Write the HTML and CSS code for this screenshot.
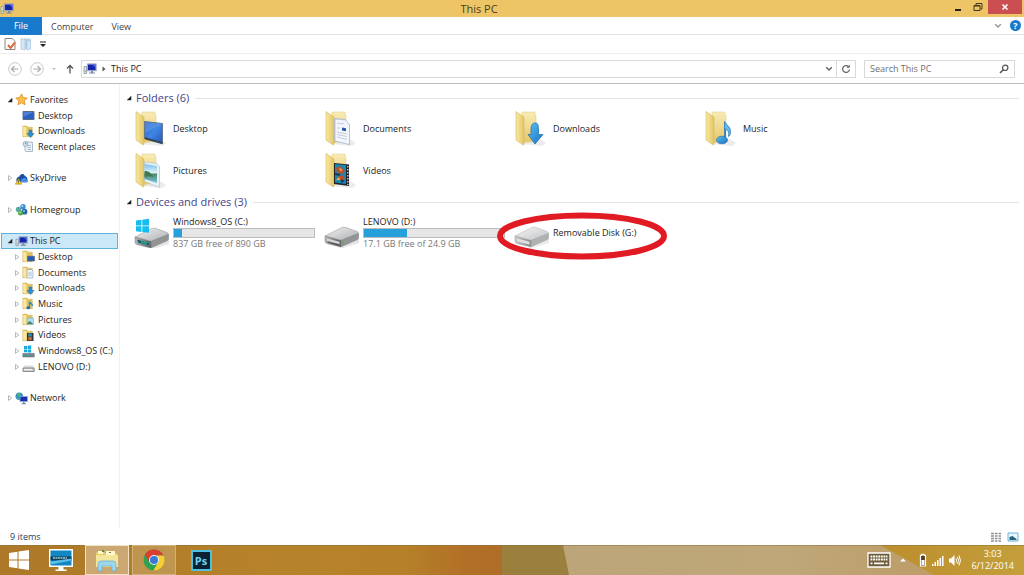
FILE: index.html
```html
<!DOCTYPE html>
<html lang="en">
<head>
<meta charset="utf-8">
<title>This PC</title>
<link rel="stylesheet" href="styles.css">
</head>
<body>
<svg class="defs" aria-hidden="true">
  <defs>
    <linearGradient id="gFold" x1="0" x2="1"><stop offset="0" stop-color="#f9e9a0"/><stop offset="1" stop-color="#e3c566"/></linearGradient>
    <linearGradient id="gBack" x1="0" y1="0" x2="0" y2="1"><stop offset="0" stop-color="#f8ebb4"/><stop offset="1" stop-color="#e6c669"/></linearGradient>
    <linearGradient id="gBlue" x1="0" y1="0" x2="1" y2="1"><stop offset="0" stop-color="#2f66c4"/><stop offset=".5" stop-color="#3f86e6"/><stop offset="1" stop-color="#2357b4"/></linearGradient>
    <linearGradient id="gArrow" x1="0" y1="0" x2="1" y2="1"><stop offset="0" stop-color="#5cc0f5"/><stop offset="1" stop-color="#1672c0"/></linearGradient>
    <linearGradient id="gMetal" x1="0" y1="0" x2="1" y2="1"><stop offset="0" stop-color="#f4f4f4"/><stop offset="1" stop-color="#a9abad"/></linearGradient>
    <linearGradient id="gDark" x1="0" x2="1"><stop offset="0" stop-color="#b9bbbd"/><stop offset="1" stop-color="#55585b"/></linearGradient>
    <linearGradient id="gPhoto" x1="0" y1="0" x2="0" y2="1"><stop offset="0" stop-color="#7dbdee"/><stop offset=".45" stop-color="#dcf1f7"/><stop offset=".55" stop-color="#4d8a72"/><stop offset="1" stop-color="#7fc4dc"/></linearGradient>
  </defs>
  <symbol id="pc" viewBox="0 0 14 13"><path fill="#dfe3ea" stroke="#7d889c" stroke-width=".7" d="M1 4h2.600v7H1z"/><path fill="#55b060" d="M1.600 8h1.300v1H1.600z"/><path fill="#c3ccdf" stroke="#7684a8" stroke-width=".6" d="M4.300 1.300h9v7h-9z"/><path fill="#1524a8" d="M5 2h7.600v5.600H5z"/><path fill="#5575e0" d="M9 2h3.600v3z"/><path fill="#7a88a8" d="M8 8.400h2v1.600h2v1H6v-1h2z"/></symbol>
  <symbol id="folder" viewBox="0 0 36 38"><path fill="#000" opacity=".08" d="M8 34l20 2 4-3-6-4z"/><path fill="url(#gBack)" stroke="#e0c984" stroke-width=".5" d="M8 2h13v2l1 1v26l-14 2z"/><path fill="url(#gFold)" stroke="#d2b663" stroke-width=".6" d="M2 1.500l8 5.500v27c0 1-.8 1.200-1.500.6L2 30z"/></symbol>
  <symbol id="f-desktop" viewBox="0 0 36 38"><use href="#folder"/><path fill="url(#gBlue)" stroke="#66758f" d="M10.500 11.500l18 2V33.500l-18-6z"/><path fill="#75a9f2" opacity=".4" d="M11 12l17 2-17 9z"/><path fill="#33465e" d="M10.500 27l18 5v2.200l-18-5z"/></symbol>
  <symbol id="f-documents" viewBox="0 0 36 38"><use href="#folder"/><path fill="#dde7f6" stroke="#a3b2cf" stroke-width=".6" d="M10.500 8.500l10 1 5 5v20l-15-4z"/><path fill="#f3f6fc" stroke="#9dadc9" stroke-width=".6" d="M11 9l11 1 3.500 5v19.500L11 31z"/><path fill="#2958a8" d="M18 17.500l4 .8v3l-4-.8z"/><path stroke="#a2afc6" stroke-width=".6" d="M13 13l7 .8M13 18h3M13 22l10 2M13 24.500l10 2M13 27l10 2.500"/></symbol>
  <symbol id="f-downloads" viewBox="0 0 36 38"><use href="#folder"/><path fill="url(#gArrow)" stroke="#1d6cb0" stroke-width=".7" d="M17 20c0-6 2-7 4.500-7s3 2 3 8v3.500h4.500L21 34l-7-9.500h3z"/></symbol>
  <symbol id="f-music" viewBox="0 0 36 38"><use href="#folder"/><path fill="#5ebcf2" stroke="#2573b6" stroke-width=".8" d="M20.500 11.500c2 4 6 5 6 10 0 3-1 4-2 5 1-5-1-6.500-3-7.500V29h-1z"/><ellipse cx="18" cy="30" rx="5.500" ry="3.800" fill="url(#gArrow)" stroke="#1d5fa6" stroke-width=".6"/></symbol>
  <symbol id="f-pictures" viewBox="0 0 36 38"><use href="#folder"/><path fill="#e8f1f6" stroke="#a9bac5" stroke-width=".6" d="M10.500 10l12.500 1.500 2.500 3v21l-15-6z"/><path fill="url(#gPhoto)" d="M10.500 12l12.500 2v17l-12.500-4z"/><path fill="#41784c" d="M10.500 19c5 0 6 2 9 6-4-1-6-1-9 0z"/></symbol>
  <symbol id="f-videos" viewBox="0 0 36 38"><use href="#folder"/><path fill="#22252a" d="M10 11l15 1.500V34l-15-2z"/><path fill="#1887b8" d="M11 12l11 1v19l-11-1.500z"/><path fill="#b9502a" d="M12 16l4-2 5 5-3 3-5-1zM13 25l5-2 3 3-3 4z"/><path fill="#efb34a" d="M15 16l3 1-1 3zM12 28l3-3 1 3z"/><path fill="#173d5a" d="M11 21l6 1-2 2-4-1zM17 27l4 2-4 2z"/><path stroke="#dedede" stroke-width="1.200" stroke-dasharray="1.500 1.500" d="M23.800 14v19"/></symbol>
  <symbol id="drive" viewBox="0 0 36 22"><path fill="#000" opacity=".1" d="M4 19l13 3 18-9v4l-16 5z"/><path fill="url(#gMetal)" stroke="#9b9c9e" stroke-width=".6" d="M1 10L18 1.500q2-.5 4 0l11 4q1.500.6 1.500 2L17 14.500z"/><path fill="url(#gDark)" stroke="#77797b" stroke-width=".5" d="M1 10l16 4.500v6.500L3 17.500Q1 17 1 15z"/><path fill="#929496" stroke="#77797b" stroke-width=".5" d="M17 14.500l17.500-7v4.500q0 1-1 1.600L17 21z"/><path fill="#d5d6d7" d="M3 12.500l12.500 3.300v2.700L3 15.200z"/><ellipse cx="20" cy="5" rx="3" ry="1.300" fill="#d2d3d4"/></symbol>
  <symbol id="d-hdd" viewBox="0 0 36 22"><use href="#drive"/><path fill="#2b3032" opacity=".55" d="M3 15l12 3v1.500L4 17z"/><path fill="#5bb52a" d="M18.500 15.500l1.500-.6v3l-1.500.6z"/></symbol>
  <symbol id="d-usb" viewBox="0 0 36 22"><g opacity=".72"><use href="#drive"/></g></symbol>
  <symbol id="win" viewBox="0 0 20 20"><path fill="currentColor" d="M0 3l8.500-1.200v7.700H0zM9.500 1.600L20 0v9.500H9.500zM0 10.500h8.500v7.700L0 17zM9.500 10.500H20V20L9.500 18.400z"/></symbol>
  <symbol id="d-os" viewBox="0 0 36 30"><use href="#drive" y="9" width="36" height="22"/><path fill="#14636a" d="M3 21.500l12.500 3.300v2.700L4 24.800z"/><path fill="#1fa58c" d="M7 23l6 1.500v1.700l-6-1.500z"/><path fill="#14bdf0" d="M2 2.500L7.500 1.800v5.700H2zM8.300 1.700L15 .8v6.700H8.300zM2 8.300h5.500V14L2 13.300zM8.300 8.300H15v6.500l-6.700-.8z"/></symbol>
  <symbol id="sf" viewBox="0 0 13 13"><path fill="#e2c15c" stroke="#cfae52" stroke-width=".5" d="M.8 1h4l1 1.200h4.500v9.500H.8z"/><path fill="#f8e8a4" d="M1.200 1.500l3.300 1v9.200l-3.300-.6z"/></symbol>
  <symbol id="s-desktop" viewBox="0 0 13 13"><use href="#sf"/><path fill="#275bb8" stroke="#51647f" stroke-width=".6" d="M5.500 6.200h7V11h-7z"/></symbol>
  <symbol id="s-documents" viewBox="0 0 13 13"><use href="#sf"/><path fill="#eaf3fb" stroke="#8ba5c0" stroke-width=".6" d="M5 3.500h4.500L11 5v7H5z"/><path stroke="#8aa2bd" stroke-width=".6" d="M6 7h4M6 9h4"/></symbol>
  <symbol id="s-downloads" viewBox="0 0 13 13"><use href="#sf"/><path fill="#2b8ed8" stroke="#1766a8" stroke-width=".4" d="M7 5h3v3.500h2.300L8.500 12.500 4.800 8.500H7z"/></symbol>
  <symbol id="s-music" viewBox="0 0 13 13"><use href="#sf"/><path fill="none" stroke="#2588d2" stroke-width="1.300" d="M7.500 10.500V4.500c0 2 3.500 2 2.800 4.500"/><ellipse cx="6.300" cy="10.700" rx="1.900" ry="1.500" fill="#1a6fbe"/></symbol>
  <symbol id="s-pictures" viewBox="0 0 13 13"><use href="#sf"/><path fill="#a8dff1" stroke="#8fa9b8" stroke-width=".6" d="M5 5h6.500v6.500H5z"/><path fill="#4b8661" d="M5.300 10l2.500-2 3.400 3H5.300z"/></symbol>
  <symbol id="s-videos" viewBox="0 0 13 13"><use href="#sf"/><path fill="#30343a" d="M5 4h6.500v8H5z"/><path fill="#2b91b5" d="M6.200 4.500h3.600v3H6.200z"/><path fill="#c36a35" d="M6.200 8h3.600v3.300H6.200z"/></symbol>
  <symbol id="s-desk" viewBox="0 0 13 13"><path fill="#2a5fc0" stroke="#5d6c86" d="M1 2.500h11v8H1z"/><path fill="#6496e6" opacity=".6" d="M1.500 3h10l-10 5z"/></symbol>
  <symbol id="s-recent" viewBox="0 0 13 13"><path fill="#eef3f7" stroke="#8a9daf" stroke-width=".7" d="M3 2h7.500q-1 1 0 2v7.500H4.500Q3 11.500 3 10z"/><path stroke="#8fa3b6" stroke-width=".7" d="M5.500 5.500H9M5.500 7.500H9M5.500 9.500H9"/><circle cx="3.500" cy="4" r="2.400" fill="#d6e9f7" stroke="#7490aa" stroke-width=".7"/><path fill="none" stroke="#456" stroke-width=".6" d="M3.500 2.800V4h1"/></symbol>
  <symbol id="s-star" viewBox="0 0 13 13"><path fill="#fbc044" stroke="#dd8826" stroke-width=".8" d="M6.500.9l1.700 3.700 4 .5-3 2.700.8 4-3.500-2-3.500 2 .8-4-3-2.700 4-.5z"/></symbol>
  <symbol id="s-sky" viewBox="0 0 13 13"><path fill="#174fa6" d="M2 10C0 7 3 4.500 4.500 4.500 5 1.500 9 1 9.800 4c3 .3 3.400 5 1.700 6z"/><path fill="#4b8bdc" d="M6 10.500c-1-2 .5-4 1.800-3.800C8.500 5 11.500 5.500 11.500 7.500c2 .2 1.500 3 .5 3z"/><path fill="#fbd026" stroke="#8f7400" stroke-width=".5" d="M3.500 6.500l3.200 5.700H.4z"/><path fill="#333" d="M3.200 8.300h.7v2h-.7zM3.200 10.700h.7v.7h-.7z"/></symbol>
  <symbol id="s-home" viewBox="0 0 13 13"><circle cx="8" cy="3.700" r="2.700" fill="#3a8edb"/><circle cx="3.500" cy="6.500" r="2.700" fill="#5aa9a0"/><circle cx="9.500" cy="8.700" r="2.900" fill="#2565b6"/><circle cx="5.500" cy="10" r="2.500" fill="#55a843"/><circle cx="7.300" cy="3" r="1" fill="#b8dff8"/><circle cx="9" cy="8" r="1" fill="#9bc8f1"/><circle cx="5" cy="9.400" r=".8" fill="#c5edb1"/></symbol>
  <symbol id="s-os" viewBox="0 0 13 13"><path fill="#15a9e0" d="M2 1h3v3H2zM5.600.6h3.600V4H5.600zM2 4.600h3v2.600H2zM5.600 4.600h3.600v2.800H5.600z"/><path fill="#77868e" stroke="#59646a" stroke-width=".5" d="M.8 8.500h11.500v3.500H.8z"/><path fill="#26a3a8" d="M2 10h6v1H2z"/></symbol>
  <symbol id="s-hdd" viewBox="0 0 13 13"><path fill="#dadcdd" d="M2.500 5.500h8l1.800 3H.8z"/><path fill="#c3c5c7" stroke="#77797b" stroke-width=".8" d="M1 8h11.200v3.500H1z"/><path fill="#fff" d="M2.200 9.200h8v1h-8z"/></symbol>
  <symbol id="s-net" viewBox="0 0 13 13"><circle cx="4.300" cy="4.300" r="3.800" fill="#2f93c8"/><path fill="#60b754" d="M2 1.500l3-.5.5 2-2 1.500zM1 5l2 .5.500 2z"/><path fill="#1830b0" stroke="#93a5c9" stroke-width=".8" d="M5 4.500h7.500v5H5z"/><path fill="#7687a8" d="M8 10h1.600v1.200H11v1H6.500v-1H8z"/></symbol>
  <symbol id="open" viewBox="0 0 6 6"><path fill="#222" d="M5.300.7v4.600H.7z"/></symbol>
  <symbol id="shut" viewBox="0 0 6 6"><path fill="#fff" stroke="#a6a6a6" stroke-width=".8" d="M1.500.6L4.800 3 1.500 5.400z"/></symbol>
  <symbol id="chev" viewBox="0 0 8 6"><path fill="none" stroke="currentColor" stroke-width="1.500" d="M1.200 1.200L4 4l2.800-2.800"/></symbol>
</svg>

<header class="titlebar">
  <svg class="ic14"><use href="#pc"/></svg>
  <h1>This PC</h1>
  <div class="winbtns">
    <button aria-label="Minimize"><svg viewBox="0 0 10 10"><path fill="#222" d="M2 7h6v2H2z"/></svg></button>
    <button aria-label="Restore"><svg viewBox="0 0 10 10"><path fill="none" stroke="#443619" d="M3 3V1.500h6V7H7.500"/><path fill="none" stroke="#443619" d="M1 3.500h6v5H1z"/><path fill="#443619" d="M1 3h6v1.500H1z"/></svg></button>
    <button class="close" aria-label="Close"><svg viewBox="0 0 10 10"><path stroke="#fff" stroke-width="1.500" d="M2.500 2.500l5 5m0-5l-5 5"/></svg></button>
  </div>
</header>

<nav class="tabs">
  <button class="tab file">File</button><button class="tab">Computer</button><button class="tab">View</button>
  <span class="grow"></span>
  <button class="plain gray" aria-label="Expand ribbon"><svg class="chev"><use href="#chev"/></svg></button>
  <button class="help" aria-label="Help">?</button>
</nav>

<div class="quick">
  <button class="plain" aria-label="Properties"><svg class="ic14" viewBox="0 0 14 14"><path fill="#fff" stroke="#8a8a8a" d="M2 1.500h7.500l2.500 3v8H2z"/><path fill="none" stroke="#dd6b3c" stroke-width="2" d="M5 8l2.500 3L12 5.500"/></svg></button>
  <button class="plain" aria-label="New folder"><svg class="ic14" viewBox="0 0 14 14"><path fill="#b4d0ea" d="M5 1.500h6.500V12H5z"/><path fill="#d6e6f4" stroke="#a9c5de" stroke-width=".7" d="M2 1.500l4 1V13l-4-1zM8 4l3.500-1v9L8 13z"/></svg></button>
  <button class="plain" aria-label="Customize toolbar"><svg viewBox="0 0 8 8" class="ic8"><path fill="#222" d="M1 1.500h6v1H1zM1 4h6L4 7z"/></svg></button>
</div>

<div class="address">
  <button class="plain" aria-label="Back"><svg class="ic14" viewBox="0 0 14 14"><circle cx="7" cy="7" r="6.300" fill="none" stroke="#bbb" stroke-width=".8"/><path fill="none" stroke="#aaa" stroke-width="1.200" d="M10.500 7h-7M6.500 4l-3 3 3 3"/></svg></button>
  <button class="plain" aria-label="Forward"><svg class="ic14" viewBox="0 0 14 14"><circle cx="7" cy="7" r="6.300" fill="none" stroke="#bbb" stroke-width=".8"/><path fill="none" stroke="#aaa" stroke-width="1.200" d="M3.500 7h7M7.500 4l3 3-3 3"/></svg></button>
  <button class="plain recent" aria-label="Recent locations"><svg class="ic8" viewBox="0 0 8 8"><path fill="#bbb" d="M2 3h4L4 5z"/></svg></button>
  <button class="plain" aria-label="Up"><svg class="up" viewBox="0 0 10 10"><path fill="none" stroke="#555" stroke-width="1.300" d="M5 9.500V1.500M2 4.500l3-3 3 3"/></svg></button>
  <div class="path">
    <svg class="ic14"><use href="#pc"/></svg>
    <svg class="ic8" viewBox="0 0 8 8"><path fill="#555" d="M2.500 1.500L5.500 4l-3 2.500z"/></svg>
    <a href="#this-pc">This PC</a>
    <span class="grow"></span>
    <button class="plain" aria-label="Previous locations"><svg class="chev"><use href="#chev"/></svg></button>
    <button class="refresh" aria-label="Refresh"><svg viewBox="0 0 10 10"><path fill="none" stroke="#666" stroke-width="1.300" d="M7.500 2.700A3.400 3.400 0 1 0 8.400 5.500"/><path fill="#666" d="M5.500 3.800h3.200V.6z"/></svg></button>
  </div>
  <form class="search">
    <input type="search" aria-label="Search This PC" placeholder="Search This PC">
    <button class="plain" type="button" aria-label="Search"><svg class="up" viewBox="0 0 10 10"><circle cx="6.200" cy="3.800" r="2.700" fill="none" stroke="#555" stroke-width="1.200"/><path stroke="#555" stroke-width="1.600" d="M4.300 5.700L1 9"/></svg></button>
  </form>
</div>

<div class="body">
  <aside>
    <ul class="tree">
      <li class="root"><svg class="tw"><use href="#open"/></svg><svg class="ic13"><use href="#s-star"/></svg><a href="#">Favorites</a></li>
      <li><svg class="ic13"><use href="#s-desk"/></svg><a href="#">Desktop</a></li>
      <li><svg class="ic13"><use href="#s-downloads"/></svg><a href="#">Downloads</a></li>
      <li><svg class="ic13"><use href="#s-recent"/></svg><a href="#">Recent places</a></li>
      <li aria-hidden="true"></li>
      <li class="root"><svg class="tw"><use href="#shut"/></svg><svg class="ic13"><use href="#s-sky"/></svg><a href="#">SkyDrive</a></li>
      <li aria-hidden="true"></li>
      <li class="root"><svg class="tw"><use href="#shut"/></svg><svg class="ic13"><use href="#s-home"/></svg><a href="#">Homegroup</a></li>
      <li aria-hidden="true"></li>
      <li class="root selected" id="this-pc"><svg class="tw"><use href="#open"/></svg><svg class="ic13"><use href="#pc"/></svg><a href="#">This PC</a></li>
      <li><svg class="tw"><use href="#shut"/></svg><svg class="ic13"><use href="#s-desktop"/></svg><a href="#">Desktop</a></li>
      <li><svg class="tw"><use href="#shut"/></svg><svg class="ic13"><use href="#s-documents"/></svg><a href="#">Documents</a></li>
      <li><svg class="tw"><use href="#shut"/></svg><svg class="ic13"><use href="#s-downloads"/></svg><a href="#">Downloads</a></li>
      <li><svg class="tw"><use href="#shut"/></svg><svg class="ic13"><use href="#s-music"/></svg><a href="#">Music</a></li>
      <li><svg class="tw"><use href="#shut"/></svg><svg class="ic13"><use href="#s-pictures"/></svg><a href="#">Pictures</a></li>
      <li><svg class="tw"><use href="#shut"/></svg><svg class="ic13"><use href="#s-videos"/></svg><a href="#">Videos</a></li>
      <li><svg class="tw"><use href="#shut"/></svg><svg class="ic13"><use href="#s-os"/></svg><a href="#">Windows8_OS (C:)</a></li>
      <li><svg class="tw"><use href="#shut"/></svg><svg class="ic13"><use href="#s-hdd"/></svg><a href="#">LENOVO (D:)</a></li>
      <li aria-hidden="true"></li>
      <li class="root"><svg class="tw"><use href="#shut"/></svg><svg class="ic13"><use href="#s-net"/></svg><a href="#">Network</a></li>
    </ul>
  </aside>
  <main>
    <section>
      <h2><svg class="tw"><use href="#open"/></svg>Folders (6)</h2>
      <div class="tiles">
        <a class="tile" href="#"><svg class="fi"><use href="#f-desktop"/></svg>Desktop</a>
        <a class="tile" href="#"><svg class="fi"><use href="#f-documents"/></svg>Documents</a>
        <a class="tile" href="#"><svg class="fi"><use href="#f-downloads"/></svg>Downloads</a>
        <a class="tile" href="#"><svg class="fi"><use href="#f-music"/></svg>Music</a>
        <a class="tile" href="#"><svg class="fi"><use href="#f-pictures"/></svg>Pictures</a>
        <a class="tile" href="#"><svg class="fi"><use href="#f-videos"/></svg>Videos</a>
      </div>
    </section>
    <section>
      <h2><svg class="tw"><use href="#open"/></svg>Devices and drives (3)</h2>
      <div class="tiles">
        <a class="tile" href="#"><svg class="di"><use href="#d-os"/></svg><span class="info"><span>Windows8_OS (C:)</span><span class="bar"><span class="fill" style="width:6%"></span></span><span class="free">837 GB free of 890 GB</span></span></a>
        <a class="tile" href="#"><svg class="di low"><use href="#d-hdd"/></svg><span class="info"><span>LENOVO (D:)</span><span class="bar"><span class="fill" style="width:31%"></span></span><span class="free">17.1 GB free of 24.9 GB</span></span></a>
        <a class="tile" href="#"><svg class="di low"><use href="#d-usb"/></svg>Removable Disk (G:)<svg class="mark" viewBox="0 0 172 48"><ellipse cx="86" cy="24" rx="82" ry="20.500" fill="none" stroke="#e01b24" stroke-width="6"/></svg></a>
      </div>
    </section>
  </main>
</div>

<div class="status">
  <span>9 items</span><span class="grow"></span>
  <button class="plain" aria-label="Details view"><svg class="view" viewBox="0 0 12 10"><path stroke="#8b8f96" stroke-width="1.300" d="M1 1.500h3M1 4h3M1 6.500h3M1 9h3M5 1.500h2.500M5 4h2.500M5 6.500h2.500M5 9h2.500M8.500 1.500H11M8.500 4H11M8.500 6.500H11M8.500 9H11"/></svg></button>
  <button class="plain" aria-label="Large icons view"><svg class="view" viewBox="0 0 12 10"><path fill="#eaf7fd" stroke="#6db4d6" d="M1 1h10v8H1z"/><path fill="#2a6382" d="M2.500 5l3-1 4 3v1h-7z"/></svg></button>
</div>

<footer class="taskbar">
  <svg class="wall" viewBox="0 0 1024 30" preserveAspectRatio="none" aria-hidden="true">
    <defs>
      <linearGradient id="w1" x1="0" x2="1"><stop offset="0" stop-color="#ad7828"/><stop offset=".6" stop-color="#b7832a"/><stop offset=".8" stop-color="#b58028"/><stop offset=".92" stop-color="#b27027"/><stop offset="1" stop-color="#ae6c28"/></linearGradient>
      <linearGradient id="w2" x1="0" x2="1"><stop offset="0" stop-color="#bca578"/><stop offset=".6" stop-color="#bfa778"/><stop offset="1" stop-color="#bd9c68"/></linearGradient>
      <linearGradient id="w3" x1="0" x2="1"><stop offset="0" stop-color="#bc8d2c"/><stop offset="1" stop-color="#c49f3b"/></linearGradient>
    </defs>
    <path fill="url(#w1)" d="M0 0h506v30H0z"/><path fill="#9b7f3c" d="M502 0h64l6 30h-70z"/><path fill="url(#w2)" d="M563 0h325l50 30H569z"/><path fill="url(#w3)" d="M880 0h144v30H934q-28-16-54-30z"/><path fill="#8a7440" opacity=".5" d="M0 0h1024v1H0z"/>
  </svg>
  <button class="task" aria-label="Start"><svg viewBox="0 0 20 20" class="ic20"><g color="#fff"><use href="#win"/></g></svg></button>
  <button class="task" aria-label="Lenovo"><svg class="ic26" viewBox="0 0 26 24"><path fill="#fff" d="M1 1h24v18H1z"/><path fill="#1387c2" d="M2.500 2.500h21v15h-21z"/><path fill="#0a405f" d="M2.500 8.500h21v4h-21z"/><path fill="#59bfe7" d="M2.500 13.500l21-3v2l-21 4z"/><path stroke="#fff" stroke-dasharray="2 .5" d="M5 10h14"/><path fill="#fff" d="M10.500 19h5v2.500h3V23h-11v-1.500h3z"/></svg></button>
  <button class="task on bright" aria-label="File Explorer"><svg class="ic26" viewBox="0 0 26 24"><path fill="#e7c95e" d="M2 4l7-1 2 2h12v14H2z"/><path fill="#fff8d3" d="M4 3h5v3H4zM12 3h9v4h-9z"/><path fill="#5e8c37" d="M8 2h2v2H8zM15 4h2v1h-2z"/><path fill="#f3e69a" d="M2 7h22v12H2z"/><path fill="#9dd6ef" stroke="#65aacd" stroke-width=".7" d="M4 23v-7q0-3 3-3h12q3 0 3 3v7h-4v-5H8v5z"/></svg></button>
  <button class="task on" aria-label="Chrome"><svg class="ic22" viewBox="0 0 22 22"><circle cx="11" cy="11" r="10.500" fill="#2fa44f"/><path fill="#dc3d31" d="M1.900 5.700A10.500 10.500 0 0 1 20.500 6.500H11L6.500 13.500z"/><path fill="#f7cf33" d="M20.500 6.500A10.500 10.500 0 0 1 10.300 21.500L15.500 13 14 6.500z"/><circle cx="11" cy="11" r="5" fill="#f2f2f2"/><circle cx="11" cy="11" r="4" fill="#3a78d6"/></svg></button>
  <button class="task" aria-label="Photoshop"><span class="ps">Ps</span></button>
  <span class="grow"></span>
  <div class="tray">
    <button class="plain" aria-label="Touch keyboard"><svg class="kb" viewBox="0 0 24 16"><path fill="#6f5b36" stroke="#fff" stroke-width="1.300" d="M1 1h22v14H1z"/><path stroke="#fff" stroke-width="1.800" stroke-dasharray="1.900 .7" d="M3.500 4.500h17M3.500 7.500h17"/><path stroke="#fff" stroke-width="1.800" d="M3.500 11.300h2M7 11.300h10M18.500 11.300h2"/></svg></button>
    <button class="plain more" aria-label="Show hidden icons"><svg class="ic8" viewBox="0 0 8 8"><path fill="#fff" d="M1 5.500h6L4 2.500z"/></svg></button>
    <button class="plain" aria-label="Battery"><svg class="bat" viewBox="0 0 8 14"><path fill="#53401f" stroke="#fff" stroke-width="1.200" d="M3 1.300h2v1h1.500V13h-5V2.300H3z"/><path fill="#fff" d="M2.500 7h3v5h-3z"/></svg></button>
    <button class="plain" aria-label="Network"><svg class="ic13" viewBox="0 0 13 13"><path fill="#fff" d="M1 10h1.500v2H1zM3.500 8H5v4H3.500zM6 6h1.500v6H6zM8.500 4H10v8H8.500zM11 2h1.500v10H11z"/></svg></button>
    <button class="plain" aria-label="Volume"><svg class="ic13" viewBox="0 0 13 13"><path fill="#fff" d="M1 4.500h2L6.500 1v11L3 8.500H1z"/><path fill="none" stroke="#fff" d="M8 4.500q1.200 2 0 4M9.500 3q2.300 3.500 0 7M11 1.500q3 5 0 10"/></svg></button>
    <div class="clock"><time>3:03</time><time>6/12/2014</time></div>
  </div>
</footer>
</body>
</html>
```
FILE: styles.css
```css
* { box-sizing: border-box; }
body {
  margin: 0;
  min-height: 100vh;
  display: flex;
  flex-direction: column;
  background: #fff;
  color: #1c1c1c;
  font: 9px/12px "Open Sans", "Noto Sans", sans-serif;
}
a { color: inherit; text-decoration: none; }
button { padding: 0; border: 0; background: none; color: inherit; font: inherit; }
svg { display: block; flex: none; }
.defs { position: absolute; width: 0; height: 0; }
.grow { flex: 1; }
.plain { display: flex; align-items: center; }
.ic8 { width: 8px; height: 8px; }
.ic13 { width: 13px; height: 13px; }
.ic14 { width: 14px; height: 14px; }
.ic20 { width: 20px; height: 20px; }
.ic22 { width: 22px; height: 22px; }
.ic26 { width: 26px; height: 24px; }
.up { width: 10px; height: 10px; }
.chev { width: 8px; height: 6px; }
.tw { width: 6px; height: 6px; }

.titlebar {
  display: grid;
  grid-template-columns: 1fr auto 1fr;
  height: 17px;
  align-items: center;
  background: #eec566;
}
.titlebar h1 { margin: 0; padding-right: 66px; color: #4a3d20; font-size: 11px; line-height: 16px; font-weight: 400; }
.winbtns { display: flex; align-self: start; justify-content: flex-end; padding-right: 2px; }
.winbtns button { display: grid; place-items: center; width: 20px; height: 14px; }
.winbtns svg { width: 10px; height: 10px; }
.winbtns .close { width: 34px; background: #cb4f50; }

.tabs { display: flex; align-items: center; height: 18px; padding-right: 3px; border-bottom: 1px solid #e3e3e3; color: #444; }
.tab { height: 18px; padding: 2px 9px 0; }
.tab.file { width: 42px; padding: 0; background: #1979ca; color: #fff; }
.gray { color: #999; }
.help { width: 11px; height: 11px; margin-left: 8px; border-radius: 50%; background: #1979ca; color: #fff; line-height: 11px; font-weight: 700; }

.quick { display: flex; align-items: center; gap: 2px; height: 19px; padding-left: 3px; border-bottom: 1px solid #ededed; }
.quick button:last-child { margin-left: 4px; }

.address { display: flex; align-items: center; gap: 8px; height: 30px; padding: 0 9px 0 8px; border-bottom: 1px solid #bdbdbd; }
.address .recent { margin: 0 -1px 0 -2px; }
.path, .search { display: flex; align-items: center; height: 18px; border: 1px solid #d9d9d9; }
.path { flex: 1; gap: 3px; padding-left: 1px; margin-left: -2px; color: #222; }
.path .chev { color: #666; }
.refresh { display: grid; place-items: center; width: 19px; height: 16px; border-left: 1px solid #d9d9d9; }
.refresh svg { width: 10px; height: 10px; }
.search { width: 151px; padding: 0 5px; }
.search input { flex: 1; min-width: 0; padding: 0; border: 0; outline: 0; background: none; color: #555; font: inherit; }
.search input::placeholder { color: #6f6f6f; opacity: 1; }

.body { flex: 1; display: flex; }
aside { flex: none; width: 120px; padding: 8px 1px 0; border-right: 1px solid #f2f2f2; }
.tree {
  display: grid;
  grid-auto-rows: 1fr;
  height: 314px;
  margin: 0;
  padding: 0;
  list-style: none;
}
.tree li { display: flex; align-items: center; gap: 2px; width: 117px; padding-left: 21px; }
.tree li:not(.root):has(.tw) { padding-left: 13px; }
.tree .root { padding-left: 6px; }
.tree li a { margin-left: 1px; white-space: nowrap; }
.tree .root a { margin-left: 0; }
.tree .selected { background: #cbe8f6; border: 1px solid #5fb2dc; padding-left: 5px; }

main { flex: 1; min-width: 0; padding: 6px 5px 0 6px; }
h2 { display: flex; align-items: center; gap: 4px; margin: 0; color: #44448a; font-size: 11px; line-height: 16px; font-weight: 400; }
h2::after { content: ""; flex: 1; height: 1px; margin-left: 2px; background: #e4e4e8; }
.tiles { display: grid; grid-template-columns: repeat(auto-fill, 190px); grid-auto-rows: 42px; padding: 2px 0 2px 8px; }
.tile { position: relative; display: flex; align-items: center; gap: 3px; }
.fi { width: 36px; height: 38px; }
.di { width: 36px; height: 30px; }
.di.low { height: 22px; margin-top: 8px; }
.info { display: grid; width: 142px; }
.bar { height: 10px; border: 1px solid #bcbcbc; background: #e6e6e6; }
.fill { display: block; height: 100%; background: #26a0da; }
.free { color: #777; }
.mark { position: absolute; left: -18px; top: 0; width: 172px; height: 48px; pointer-events: none; }

.status { display: flex; align-items: center; gap: 5px; height: 17px; padding: 0 5px 0 10px; color: #24405e; }
.view { width: 12px; height: 10px; }

.taskbar { position: relative; display: flex; align-items: stretch; height: 30px; gap: 3px; color: #fff; }
.taskbar > * { position: relative; }
.taskbar .wall { position: absolute; width: 100%; height: 100%; }
.task { display: grid; place-items: center; width: 44px; }
.task:nth-of-type(1) { width: 37px; }
.task:nth-of-type(2) { width: 42px; }
.task.on { border: 1px solid #d3b27a; background: rgb(255 255 255 / 18%); }
.task.bright { border-color: #f1e3c6; background: rgb(255 255 255 / 34%); }
.ps { width: 21px; height: 21px; border: 2px solid #4fc0e2; background: #0b2233; color: #6fd5f3; font-size: 11px; line-height: 17px; font-weight: 700; }
.tray { display: flex; align-items: center; gap: 4px; padding-right: 10px; }
.kb { width: 24px; height: 16px; }
.tray .more { margin: 0 8px 0 4px; }
.bat { width: 8px; height: 14px; }
.clock { display: grid; margin-left: 6px; text-align: center; }
```
